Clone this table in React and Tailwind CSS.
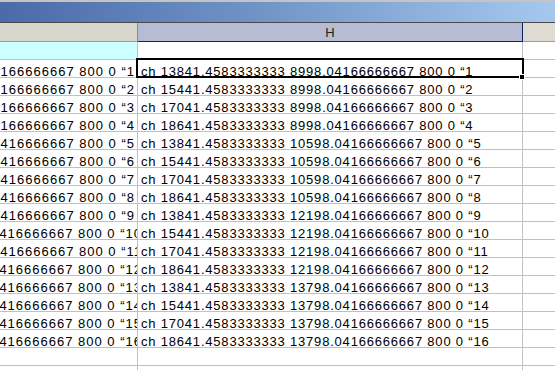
import React from 'react';

const font = { fontFamily: '"Liberation Sans", Arial, sans-serif' };

const xs = ['13841', '15441', '17041', '18641'];
const ys = ['8998.04166666667', '10598.04166666667', '12198.04166666667', '13798.04166666667'];

const rows = Array.from({ length: 16 }, (_, i) => ({
  n: i + 1,
  h: `ch ${xs[i % 4]}.4583333333 ${ys[Math.floor(i / 4)]} 800 0 \u201C${i + 1}`,
  g: `${i < 4 ? '8998.04166666667' : '10598.0416666667'} 800 0 \u201C${i + 1}`,
}));

const Cell = ({ children, className }) => (
  <div className={`h-[18px] border-b border-[#c0c0c0] overflow-hidden whitespace-nowrap ${className}`}>
    {children}
  </div>
);

export default function App() {
  return (
    <div className="w-[555px] h-[370px] overflow-hidden bg-white relative text-[13px] text-black" style={font}>
      {/* title strip */}
      <div className="h-[2px] bg-[#c4c4c4]" />
      <div className="h-[20px] bg-gradient-to-r from-[#4b6aa9] via-[#7397c9] to-[#a6c8ef]" />
      <div className="h-[1px] bg-[#4a4a4a]" />

      {/* column headers */}
      <div className="flex h-[19px]">
        <div className="w-[137px] bg-[#d9d6ce] border-b border-[#9c9c9c]" />
        <div className="w-[1px] bg-[#8a8a8a]" />
        <div className="w-[384px] bg-[#b6bcd3] border-b border-[#0a246a] flex justify-center leading-[18px] pt-[1px] text-[#222]">
          H
        </div>
        <div className="w-[1px] bg-[#0a246a]" />
        <div className="flex-1 bg-[#dedbd2] border-b border-[#9c9c9c]" />
      </div>

      {/* body */}
      <div className="flex">
        <div className="w-[137px] flex flex-col overflow-hidden">
          <Cell className="bg-[#ccffff]" />
          {rows.map((r) => (
            <Cell
              key={r.n}
              className={`flex justify-end pt-[3px] leading-[17px] tracking-[1px] ${r.n < 10 ? 'pr-[2px]' : 'mr-[-5px]'}`}
            >
              {r.g}
            </Cell>
          ))}
          <Cell />
          <Cell />
        </div>
        <div className="w-[1px] bg-[#c0c0c0]" />
        <div className="w-[384px] flex flex-col">
          <Cell />
          {rows.map((r) => (
            <Cell key={r.n} className="pl-[3px] pt-[3px] leading-[17px] tracking-[0.8px]">
              {r.h}
            </Cell>
          ))}
          <Cell />
          <Cell />
        </div>
        <div className="w-[1px] bg-[#c0c0c0]" />
        <div className="flex-1 flex flex-col">
          {Array.from({ length: 19 }, (_, i) => (
            <Cell key={i} />
          ))}
        </div>
      </div>

      {/* active cell */}
      <div className="absolute left-[136px] top-[58px] w-[388px] h-[20px] border-2 border-black" />
      <div className="absolute left-[519px] top-[74px] w-[6px] h-[6px] bg-black border border-white" />
    </div>
  );
}
